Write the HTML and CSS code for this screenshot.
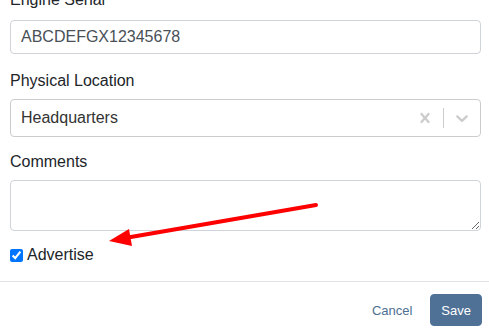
FILE: index.html
```html
<!DOCTYPE html>
<html>
<head>
<meta charset="utf-8">
<link rel="stylesheet" href="styles.css">
</head>
<body>
<div class="modal">
  <div class="modal-body">
    <div class="group g1">
      <label class="label">Engine Serial</label>
      <input class="input" type="text" value="ABCDEFGX12345678">
    </div>
    <div class="group g2">
      <label class="label">Physical Location</label>
      <div class="select">
        <div class="value">Headquarters</div>
        <div class="indicators">
          <div class="ind">
            <svg width="20" height="20" viewBox="0 0 20 20"><path fill="#cccccc" d="M14.348 14.849c-0.469 0.469-1.229 0.469-1.697 0l-2.651-3.030-2.651 3.029c-0.469 0.469-1.229 0.469-1.697 0-0.469-0.469-0.469-1.229 0-1.697l2.758-3.15-2.759-3.152c-0.469-0.469-0.469-1.228 0-1.697s1.228-0.469 1.697 0l2.652 3.031 2.651-3.031c0.469-0.469 1.228-0.469 1.697 0s0.469 1.229 0 1.697l-2.758 3.152 2.758 3.15c0.469 0.469 0.469 1.229 0 1.698z"/></svg>
          </div>
          <span class="sep"></span>
          <div class="ind">
            <svg width="20" height="20" viewBox="0 0 20 20"><path fill="#cccccc" d="M4.516 7.548c0.436-0.446 1.043-0.481 1.576 0l3.908 3.747 3.908-3.747c0.533-0.481 1.141-0.446 1.574 0 0.436 0.445 0.408 1.197 0 1.615-0.406 0.418-4.695 4.502-4.695 4.502-0.217 0.223-0.502 0.335-0.787 0.335s-0.57-0.112-0.789-0.335c0 0-4.287-4.084-4.695-4.502s-0.436-1.17 0-1.615z"/></svg>
          </div>
        </div>
      </div>
    </div>
    <div class="group g3">
      <label class="label">Comments</label>
      <textarea class="textarea"></textarea>
    </div>
    <div class="check-row">
      <input type="checkbox" class="check" checked>
      <span class="check-label">Advertise</span>
    </div>
  </div>
  <div class="modal-footer">
    <button class="btn btn-link">Cancel</button>
    <button class="btn btn-primary">Save</button>
  </div>
  <svg class="arrow" width="489" height="329" viewBox="0 0 489 329">
    <line x1="316" y1="217" x2="128" y2="249.5" stroke="#ff0000" stroke-width="4" stroke-linecap="round"/>
    <polygon points="109,253 129,241 132,258" fill="#ff0000"/>
  </svg>
</div>
</body>
</html>
```

FILE: styles.css
```css
* { box-sizing: border-box; }
html, body {
  margin: 0;
  padding: 0;
  background: #ffffff;
  overflow: hidden;
}
body {
  font-family: "Liberation Sans", Arial, sans-serif;
  color: #212529;
  width: 489px;
  height: 329px;
}
.modal {
  position: relative;
  width: 489px;
  height: 329px;
}
.modal-body {
  padding: 0 8px 0 10px;
}
.group {
  display: flex;
  flex-direction: column;
}
.g1 { margin-top: -12px; }
.g2 { margin-top: 15px; }
.g3 { margin-top: 13px; }
.label {
  font-size: 16px;
  line-height: 24px;
  margin-bottom: 8px;
}
.g2 .label { margin-bottom: 6px; }
.g3 .label { margin-bottom: 6px; }
.input {
  height: 34px;
  border: 1px solid #ced4da;
  border-radius: 4px;
  padding: 6px 10px;
  font-family: "Liberation Sans", Arial, sans-serif;
  font-size: 16px;
  color: #495057;
  width: 100%;
  outline: none;
}
.select {
  height: 38px;
  border: 1px solid #cccccc;
  border-radius: 4px;
  display: flex;
  align-items: center;
  justify-content: space-between;
}
.value {
  padding: 0 10px;
  font-size: 16px;
  color: #333333;
}
.indicators {
  display: flex;
  align-self: stretch;
  align-items: center;
}
.ind {
  padding: 8px;
  display: flex;
}
.sep {
  width: 1px;
  align-self: stretch;
  margin: 8px 0;
  background: #cccccc;
}
.textarea {
  height: 51px;
  border: 1px solid #ced4da;
  border-radius: 4px;
  width: 100%;
  display: block;
  font-family: "Liberation Sans", Arial, sans-serif;
  font-size: 16px;
  padding: 6px 10px;
  resize: vertical;
}
.check-row {
  margin-top: 12px;
  display: flex;
  align-items: center;
  height: 24px;
}
.check {
  width: 13px;
  height: 13px;
  margin: 0 4px 0 0;
}
.check-label {
  font-size: 16px;
  line-height: 24px;
}
.modal-footer {
  margin-top: 14px;
  border-top: 1px solid #dee2e6;
  padding: 12px 7px 0 0;
  display: flex;
  justify-content: flex-end;
  align-items: center;
  gap: 7px;
}
.btn {
  font-family: "Liberation Sans", Arial, sans-serif;
  font-size: 13px;
  height: 32px;
  border-radius: 4px;
  border: 1px solid transparent;
  padding: 0 10px;
  cursor: pointer;
}
.btn-link {
  background: transparent;
  color: #4d6f93;
}
.btn-primary {
  background: #4f7196;
  border-color: #4f7196;
  color: #ffffff;
}
.arrow {
  position: absolute;
  left: 0;
  top: 0;
  pointer-events: none;
}
```
